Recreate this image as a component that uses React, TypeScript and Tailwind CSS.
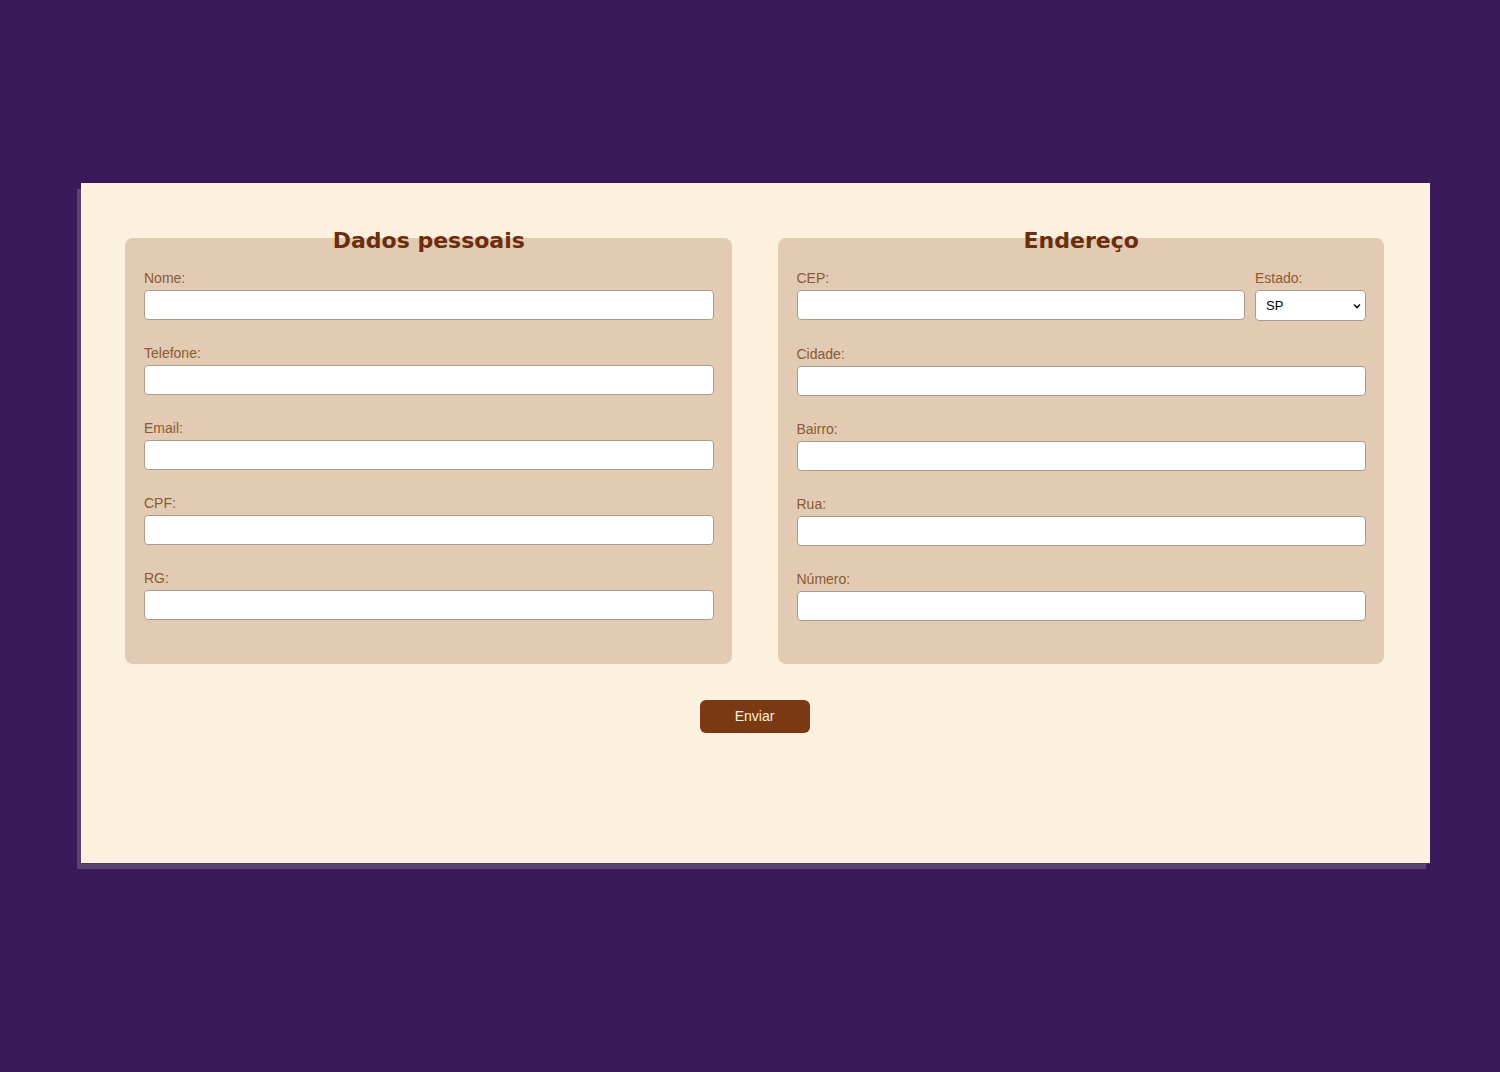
import React from "react";

const labelCls = "block text-[14px] leading-4 text-[#8b5a33] mb-1";
const inputCls =
  "block w-full h-[30px] bg-white border border-[#a99b8d] rounded-[4px] px-2 text-[13px] text-black outline-none";

function Field({ label, mb = true }: { label: string; mb?: boolean }) {
  return (
    <div className={mb ? "mb-[25px]" : ""}>
      <label className={labelCls}>{label}</label>
      <input type="text" className={inputCls} />
    </div>
  );
}

function Panel({ title, children }: { title: string; children: React.ReactNode }) {
  return (
    <div className="flex-1 bg-[#e2cbb2] rounded-lg pl-[19px] pr-[18px] pb-[18px]">
      <h2
        className="-mt-[10px] mb-[16px] text-center text-[22px] leading-[26px] font-bold text-[#6b2d0b]"
        style={{ fontFamily: '"DejaVu Sans", Verdana, sans-serif' }}
      >
        {title}
      </h2>
      {children}
    </div>
  );
}

export default function App() {
  return (
    <div
      className="min-h-screen bg-[#3a185a] pt-[183px] pl-[81px]"
      style={{ fontFamily: '"Liberation Sans", Arial, sans-serif' }}
    >
      <div className="w-[1349px] h-[680px] bg-[#fcf0df] shadow-[0_1px_0_#4a3a48,-4px_6px_0_#58436e] pt-[55px] pl-[44px] pr-[46px]">
        <div className="flex gap-[46px]">
          <Panel title="Dados pessoais">
            <Field label="Nome:" />
            <Field label="Telefone:" />
            <Field label="Email:" />
            <Field label="CPF:" />
            <Field label="RG:" />
          </Panel>
          <Panel title="Endereço">
            <div className="flex gap-[10px] mb-[25px]">
              <div className="flex-1">
                <label className={labelCls}>CEP:</label>
                <input type="text" className={inputCls} />
              </div>
              <div className="w-[111px]">
                <label className={labelCls}>Estado:</label>
                <div className="relative">
                  <select className="block w-full h-[31px] appearance-none bg-white border border-[#a99b8d] rounded-[4px] pl-[10px] text-[13px] text-black outline-none">
                    <option>SP</option>
                    <option>RJ</option>
                    <option>MG</option>
                  </select>
                  <svg
                    className="absolute right-[4px] top-[11px] pointer-events-none"
                    width="10"
                    height="10"
                    viewBox="0 0 10 10"
                  >
                    <path d="M2 3.5 L5 6.5 L8 3.5" fill="none" stroke="#111" strokeWidth="1.6" />
                  </svg>
                </div>
              </div>
            </div>
            <Field label="Cidade:" />
            <Field label="Bairro:" />
            <Field label="Rua:" />
            <Field label="Número:" />
          </Panel>
        </div>
        <div className="flex justify-center mt-[36px]">
          <button
            type="button"
            className="w-[110px] h-[33px] rounded-md bg-[#7a3912] text-[#fcefdc] text-[14px]"
          >
            Enviar
          </button>
        </div>
      </div>
    </div>
  );
}
